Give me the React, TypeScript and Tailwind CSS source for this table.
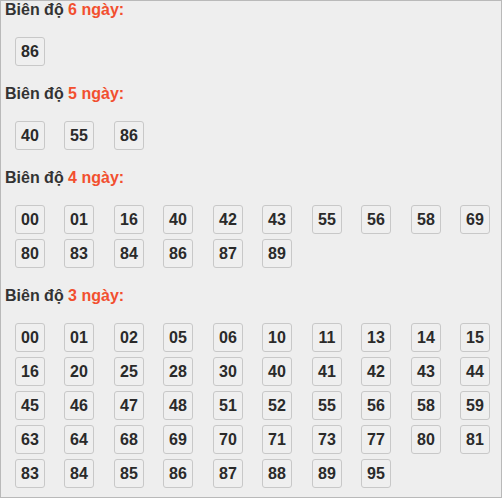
import React from "react";

const sections: { days: number; nums: string[] }[] = [
  { days: 6, nums: ["86"] },
  { days: 5, nums: ["40", "55", "86"] },
  {
    days: 4,
    nums: ["00", "01", "16", "40", "42", "43", "55", "56", "58", "69", "80", "83", "84", "86", "87", "89"],
  },
  {
    days: 3,
    nums: [
      "00", "01", "02", "05", "06", "10", "11", "13", "14", "15",
      "16", "20", "25", "28", "30", "40", "41", "42", "43", "44",
      "45", "46", "47", "48", "51", "52", "55", "56", "58", "59",
      "63", "64", "68", "69", "70", "71", "73", "77", "80", "81",
      "83", "84", "85", "86", "87", "88", "89", "95",
    ],
  },
];

export default function App() {
  return (
    <div
      className="w-[502px] h-[498px] border border-[#b9b9b9] bg-[#eeeeee] pl-[4px] overflow-hidden text-[#333333]"
      style={{ fontFamily: '"Liberation Sans", Arial, sans-serif' }}
    >
      {sections.map((s, i) => (
        <div key={s.days} className={i === 0 ? "" : "mt-[19px]"}>
          <div className="text-[16px] leading-[18px] font-bold">
            Biên độ <span className="text-[#f24f2f]">{s.days} ngày:</span>
          </div>
          <div className="mt-[18px] ml-[10px] grid grid-cols-[49px_50px_49px_50px_49px_50px_49px_50px_49px_30px] gap-y-[5px]">
            {s.nums.map((n, j) => (
              <div
                key={j}
                className="w-[30px] h-[29px] border border-[#c8c8c8] rounded-[3px] bg-[#efefef] flex items-center justify-center text-[16px] font-bold text-[#2a2a2a]"
              >
                {n}
              </div>
            ))}
          </div>
        </div>
      ))}
    </div>
  );
}
